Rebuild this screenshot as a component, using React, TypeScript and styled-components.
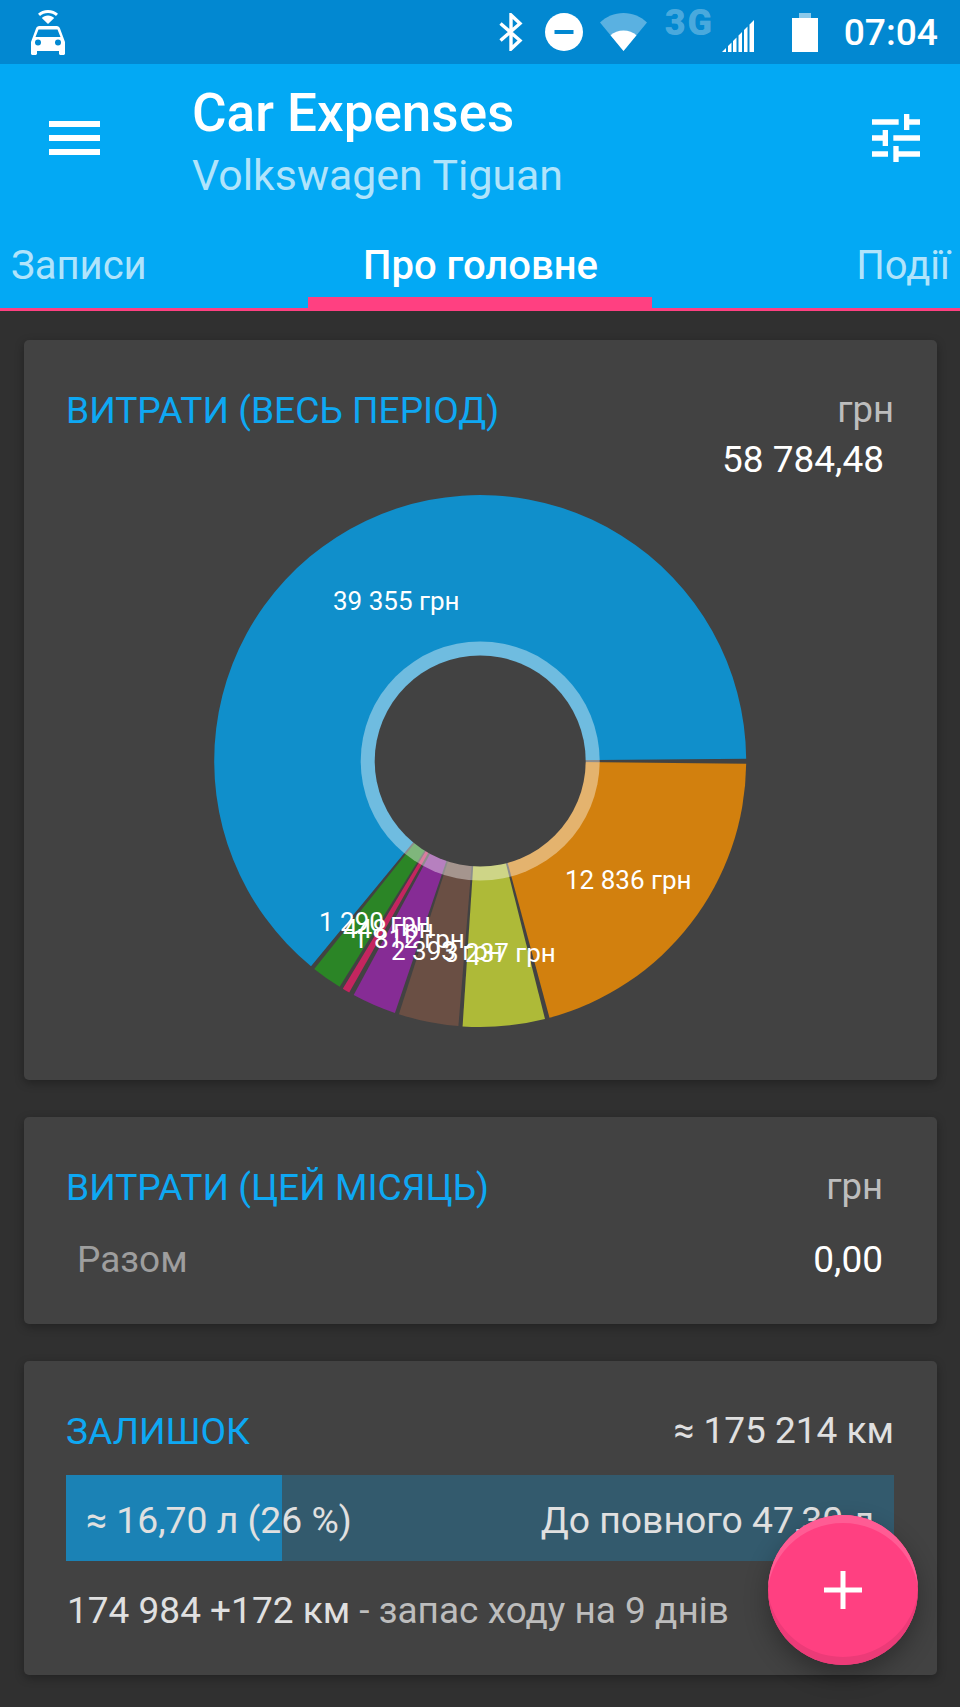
import React from "react";
import styled, { createGlobalStyle } from "styled-components";

const CX = 479.2;
const CY = 761;
const OUTER = 266;

const slices = [
  { color: "#108fcb", from: 129.5, to: 359.5 },
  { color: "#d2800e", from: 0.6, to: 74.9 },
  { color: "#aeba38", from: 75.9, to: 93.8 },
  { color: "#6a4f44", from: 94.7, to: 107.8 },
  { color: "#862c95", from: 108.7, to: 118.4 },
  { color: "#c4255f", from: 119.5, to: 121.1 },
  { color: "#2b8526", from: 121.9, to: 128.6 },
];

const labels = [
  { text: "39 355 грн", x: 332, y: 610 },
  { text: "12 836 грн", x: 564, y: 889 },
  { text: "3 237 грн", x: 443, y: 962 },
  { text: "2 393 грн", x: 390, y: 960 },
  { text: "1 812 грн", x: 352, y: 948 },
  { text: "448 грн", x: 342, y: 938 },
  { text: "1 290 грн", x: 318, y: 931 },
];

const point = (deg: number, r: number) => {
  const a = (deg * Math.PI) / 180;
  return `${(CX + r * Math.cos(a)).toFixed(2)} ${(CY + r * Math.sin(a)).toFixed(2)}`;
};

const wedge = (from: number, to: number) => {
  const large = to - from > 180 ? 1 : 0;
  return `M${CX} ${CY}L${point(from, OUTER)}A${OUTER} ${OUTER} 0 ${large} 1 ${point(to, OUTER)}Z`;
};

export default function App() {
  return (
    <Page>
      <GlobalStyle />
      <StatusBar>
        <CarIcon />
        <StatusIcons>
          <BluetoothIcon />
          <DndIcon />
          <WifiIcon />
          <NetworkType>3G</NetworkType>
          <SignalIcon />
          <Battery />
          <Clock>07:04</Clock>
        </StatusIcons>
      </StatusBar>

      <AppBar>
        <Toolbar>
          <MenuButton>
            <span />
            <span />
            <span />
          </MenuButton>
          <Titles>
            <Title>Car Expenses</Title>
            <Subtitle>Volkswagen Tiguan</Subtitle>
          </Titles>
          <TuneIcon viewBox="0 0 24 24">
            <path d="M3 17v2h6v-2H3zM3 5v2h10V5H3zm10 16v-2h8v-2h-8v-2h-2v6h2zM7 9v2H3v2h4v2h2V9H7zm14 4v-2H11v2h10zm-6-4h2V7h4V5h-4V3h-2v6z" />
          </TuneIcon>
        </Toolbar>
        <Tabs>
          <Tab $align="left">Записи</Tab>
          <Tab $align="center" $active>
            Про головне
          </Tab>
          <Tab $align="right">Події</Tab>
        </Tabs>
      </AppBar>

      <Content>
        <ChartCard>
          <ChartHeader>
            <CardTitle>ВИТРАТИ (ВЕСЬ ПЕРІОД)</CardTitle>
            <TotalBlock>
              <Unit>грн</Unit>
              <TotalValue>58 784,48</TotalValue>
            </TotalBlock>
          </ChartHeader>
          <Chart viewBox="210 491 540 540">
            {slices.map((s) => (
              <path key={s.color} d={wedge(s.from, s.to)} fill={s.color} />
            ))}
            <circle cx={CX} cy={CY} r={119.5} fill="#fff" fillOpacity={0.4} />
            <circle cx={CX} cy={CY} r={105.5} fill="#424242" />
            {labels.map((l) => (
              <ChartLabel key={l.text} x={l.x} y={l.y}>
                {l.text}
              </ChartLabel>
            ))}
          </Chart>
        </ChartCard>

        <MonthCard>
          <HeaderRow>
            <CardTitle>ВИТРАТИ (ЦЕЙ МІСЯЦЬ)</CardTitle>
            <Unit>грн</Unit>
          </HeaderRow>
          <SumRow>
            <SumLabel>Разом</SumLabel>
            <SumValue>0,00</SumValue>
          </SumRow>
        </MonthCard>

        <FuelCard>
          <HeaderRow>
            <CardTitle>ЗАЛИШОК</CardTitle>
            <Range>≈ 175 214 км</Range>
          </HeaderRow>
          <FuelBar>
            <FuelFill style={{ width: `${(216 / 828) * 100}%` }} />
            <FuelText>≈ 16,70 л (26 %)</FuelText>
            <FuelText>До повного 47,30 л</FuelText>
          </FuelBar>
          <Odometer>
            174 984 +172 км <em>- запас ходу на 9 днів</em>
          </Odometer>
        </FuelCard>
      </Content>

      <Fab>
        <PlusIcon viewBox="0 0 38 38">
          <path d="M16.5 0h5v16.5H38v5H21.5V38h-5V21.5H0v-5h16.5z" />
        </PlusIcon>
      </Fab>
    </Page>
  );
}

const CarIcon = () => (
  <CarSvg viewBox="0 0 36 46">
    <path d="M18 1c-4 0-7.600 1.500-10 3.800l2 2.200c2-1.900 4.800-3 8-3s6 1.100 8 3l2-2.200C25.600 2.500 22 1 18 1z" />
    <path d="M18 6.500c-2.500 0-4.700.9-6.200 2.400L18 15l6.200-6.100c-1.500-1.500-3.700-2.400-6.200-2.400z" />
    <path d="M30 19.500c-.5-1.400-1.700-2.500-3.300-2.500H9.300c-1.600 0-2.800 1.100-3.300 2.500L1 33v11.500c0 .9.700 1.500 1.500 1.500h3c.8 0 1.500-.6 1.500-1.500V42h22v2.500c0 .9.700 1.500 1.500 1.500h3c.8 0 1.500-.6 1.500-1.500V33l-5-13.500zM8 36.500a3 3 0 1 1 0-6 3 3 0 0 1 0 6zm20 0a3 3 0 1 1 0-6 3 3 0 0 1 0 6zM5.500 28l3-7.500h19l3 7.500h-25z" />
  </CarSvg>
);

const BluetoothIcon = () => (
  <BluetoothSvg viewBox="0 0 25 38">
    <path
      d="M1.500 10.500 21 27.500 12 36V2l9 8.500L1.500 27.500"
      fill="none"
      stroke="#fff"
      strokeWidth="3.400"
    />
  </BluetoothSvg>
);

const DndIcon = () => (
  <DndSvg viewBox="0 0 38 38">
    <circle cx="19" cy="19" r="19" fill="#fff" />
    <rect x="9.500" y="17" width="19" height="4" fill="#0288d1" />
  </DndSvg>
);

const WifiIcon = () => (
  <WifiSvg viewBox="0 0 47 38">
    <path d="M0 9.500C6 3.700 14.300 0 23.500 0S41 3.700 47 9.500L23.500 38z" fill="#fff" fillOpacity="0.35" />
    <path d="M10.500 22.300c3.500-3 8-4.800 13-4.800s9.500 1.800 13 4.800L23.500 38z" fill="#fff" />
  </WifiSvg>
);

const SignalIcon = () => (
  <SignalSvg viewBox="0 0 32 32">
    <path d="M0 32 4 28v4zM6 32v-6l3.500-3.500V32zM11 32V21l3.500-3.500V32zM16.500 32V15.500L20 12v20zM22 32V10l3.500-3.500V32zM27.500 32V4.500L32 0v32z" fill="#fff" />
  </SignalSvg>
);

const GlobalStyle = createGlobalStyle`
  html, body {
    margin: 0;
    padding: 0;
    background: #303030;
  }
  * {
    box-sizing: border-box;
  }
`;

const Page = styled.div`
  position: relative;
  width: 960px;
  height: 1707px;
  overflow: hidden;
  background: #303030;
  font-family: Roboto, "Noto Sans", sans-serif;
  color: #fff;
`;

const StatusBar = styled.header`
  height: 64px;
  background: #0288d1;
  display: flex;
  align-items: flex-start;
  justify-content: space-between;
  padding: 9px 22px 0 30px;
`;

const CarSvg = styled.svg`
  width: 36px;
  height: 46px;
  fill: #fff;
`;

const StatusIcons = styled.div`
  display: flex;
  align-items: flex-start;
`;

const BluetoothSvg = styled.svg`
  width: 25px;
  height: 38px;
  margin-top: 4px;
`;

const DndSvg = styled.svg`
  width: 38px;
  height: 38px;
  margin: 4px 0 0 21px;
`;

const WifiSvg = styled.svg`
  width: 47px;
  height: 38px;
  margin: 4px 0 0 17px;
`;

const NetworkType = styled.span`
  width: 48px;
  margin-left: 18px;
  font-weight: 900;
  font-size: 36px;
  line-height: 29px;
  letter-spacing: 2px;
  color: rgba(255, 255, 255, 0.3);
`;

const SignalSvg = styled.svg`
  width: 32px;
  height: 32px;
  margin: 11px 0 0 9px;
`;

const Battery = styled.div`
  position: relative;
  width: 26px;
  height: 34px;
  margin: 9px 0 0 38px;
  background: #fff;

  &::before {
    content: "";
    position: absolute;
    top: -5px;
    left: 7px;
    width: 12px;
    height: 5px;
    background: rgba(255, 255, 255, 0.55);
  }
`;

const Clock = styled.span`
  margin-left: 26px;
  font-size: 37.2px;
  font-weight: 500;
  line-height: 46px;
`;

const AppBar = styled.div`
  background: #03a9f4;
  border-bottom: 3px solid #ff4081;
  height: 247px;
`;

const Toolbar = styled.div`
  height: 166px;
  display: flex;
  align-items: flex-start;
`;

const MenuButton = styled.div`
  width: 51px;
  height: 34px;
  margin: 57px 0 0 49px;
  display: flex;
  flex-direction: column;
  justify-content: space-between;

  span {
    display: block;
    height: 6px;
    background: #fff;
  }
`;

const Titles = styled.div`
  flex: 1;
  margin: 15px 0 0 92px;
`;

const Title = styled.div`
  font-size: 53px;
  font-weight: 500;
  line-height: 68px;
`;

const Subtitle = styled.div`
  font-size: 42.8px;
  line-height: 57px;
  color: rgba(255, 255, 255, 0.7);
`;

const TuneIcon = styled.svg`
  width: 64px;
  height: 64px;
  margin: 42px 32px 0 0;
  fill: #fff;
`;

const Tabs = styled.nav`
  display: grid;
  grid-template-columns: 308px 344px 308px;
  height: 78px;
`;

const Tab = styled.div<{ $align: "left" | "center" | "right"; $active?: boolean }>`
  padding: 11px 10px 0 11px;
  height: ${(p) => (p.$active ? "81px" : "78px")};
  text-align: ${(p) => p.$align};
  font-size: 40px;
  line-height: 50px;
  font-weight: ${(p) => (p.$active ? 500 : 400)};
  color: ${(p) => (p.$active ? "#fff" : "rgba(255, 255, 255, 0.7)")};
  border-bottom: ${(p) => (p.$active ? "14px solid #ff4081" : "none")};
`;

const Content = styled.main`
  padding: 29px 23px 0 24px;
  display: flex;
  flex-direction: column;
  gap: 37px;
`;

const Card = styled.section`
  background: #424242;
  border-radius: 5px;
  box-shadow: 0 3px 10px rgba(0, 0, 0, 0.3);
`;

const ChartCard = styled(Card)`
  height: 740px;
  padding: 46px 43px 0;
`;

const MonthCard = styled(Card)`
  height: 207px;
  padding: 46px 54px 0 43px;
`;

const FuelCard = styled(Card)`
  height: 314px;
  padding: 46px 43px 0;
`;

const ChartHeader = styled.div`
  display: flex;
  justify-content: space-between;
  height: 105px;
`;

const HeaderRow = styled.div`
  display: flex;
  justify-content: space-between;
  align-items: flex-start;
`;

const CardTitle = styled.h2`
  margin: 0 0 0 -1px;
  font-size: 37.2px;
  font-weight: 400;
  line-height: 48px;
  color: #0ea8f3;
`;

const TotalBlock = styled.div`
  display: flex;
  flex-direction: column;
  align-items: flex-end;
`;

const Unit = styled.span`
  font-size: 36.5px;
  line-height: 48px;
  color: #bdbdbd;
`;

const TotalValue = styled.span`
  margin-right: 10px;
  font-size: 37px;
  line-height: 52px;
  color: #fff;
`;

const Chart = styled.svg`
  display: block;
  width: 540px;
  height: 540px;
  margin: 0 auto;
`;

const ChartLabel = styled.text`
  font-family: Roboto, sans-serif;
  font-size: 26px;
  fill: #fff;
`;

const SumRow = styled.div`
  display: flex;
  justify-content: space-between;
  margin-top: 26px;
`;

const SumLabel = styled.span`
  margin-left: 10px;
  font-size: 37px;
  line-height: 46px;
  color: #9e9e9e;
`;

const SumValue = styled.span`
  font-size: 37px;
  line-height: 46px;
`;

const Range = styled.span`
  font-size: 37px;
  line-height: 48px;
  color: #e0e0e0;
`;

const FuelBar = styled.div`
  position: relative;
  height: 86px;
  margin: 20px 0 0 -1px;
  padding: 4px 20px 0;
  background: #335a6d;
  display: flex;
  align-items: center;
  justify-content: space-between;
`;

const FuelFill = styled.div`
  position: absolute;
  left: 0;
  top: 0;
  bottom: 0;
  background: #1b82b5;
`;

const FuelText = styled.span`
  position: relative;
  font-size: 37.3px;
  color: #e0e0e0;
`;

const Odometer = styled.div`
  margin-top: 26px;
  font-size: 37px;
  line-height: 48px;
  color: #e0e0e0;

  em {
    font-style: normal;
    color: #bdbdbd;
  }
`;

const Fab = styled.button`
  position: absolute;
  left: 768px;
  top: 1515px;
  width: 150px;
  height: 150px;
  border: none;
  border-radius: 50%;
  background: #ff4081;
  box-shadow: inset 0 9px 0 -1px #ff5c94, inset 0 -9px 0 -1px #ec3b78, 0 10px 24px rgba(0, 0, 0, 0.3);
  display: flex;
  align-items: center;
  justify-content: center;
  padding: 0;
`;

const PlusIcon = styled.svg`
  width: 38px;
  height: 38px;
  fill: #fff;
`;
